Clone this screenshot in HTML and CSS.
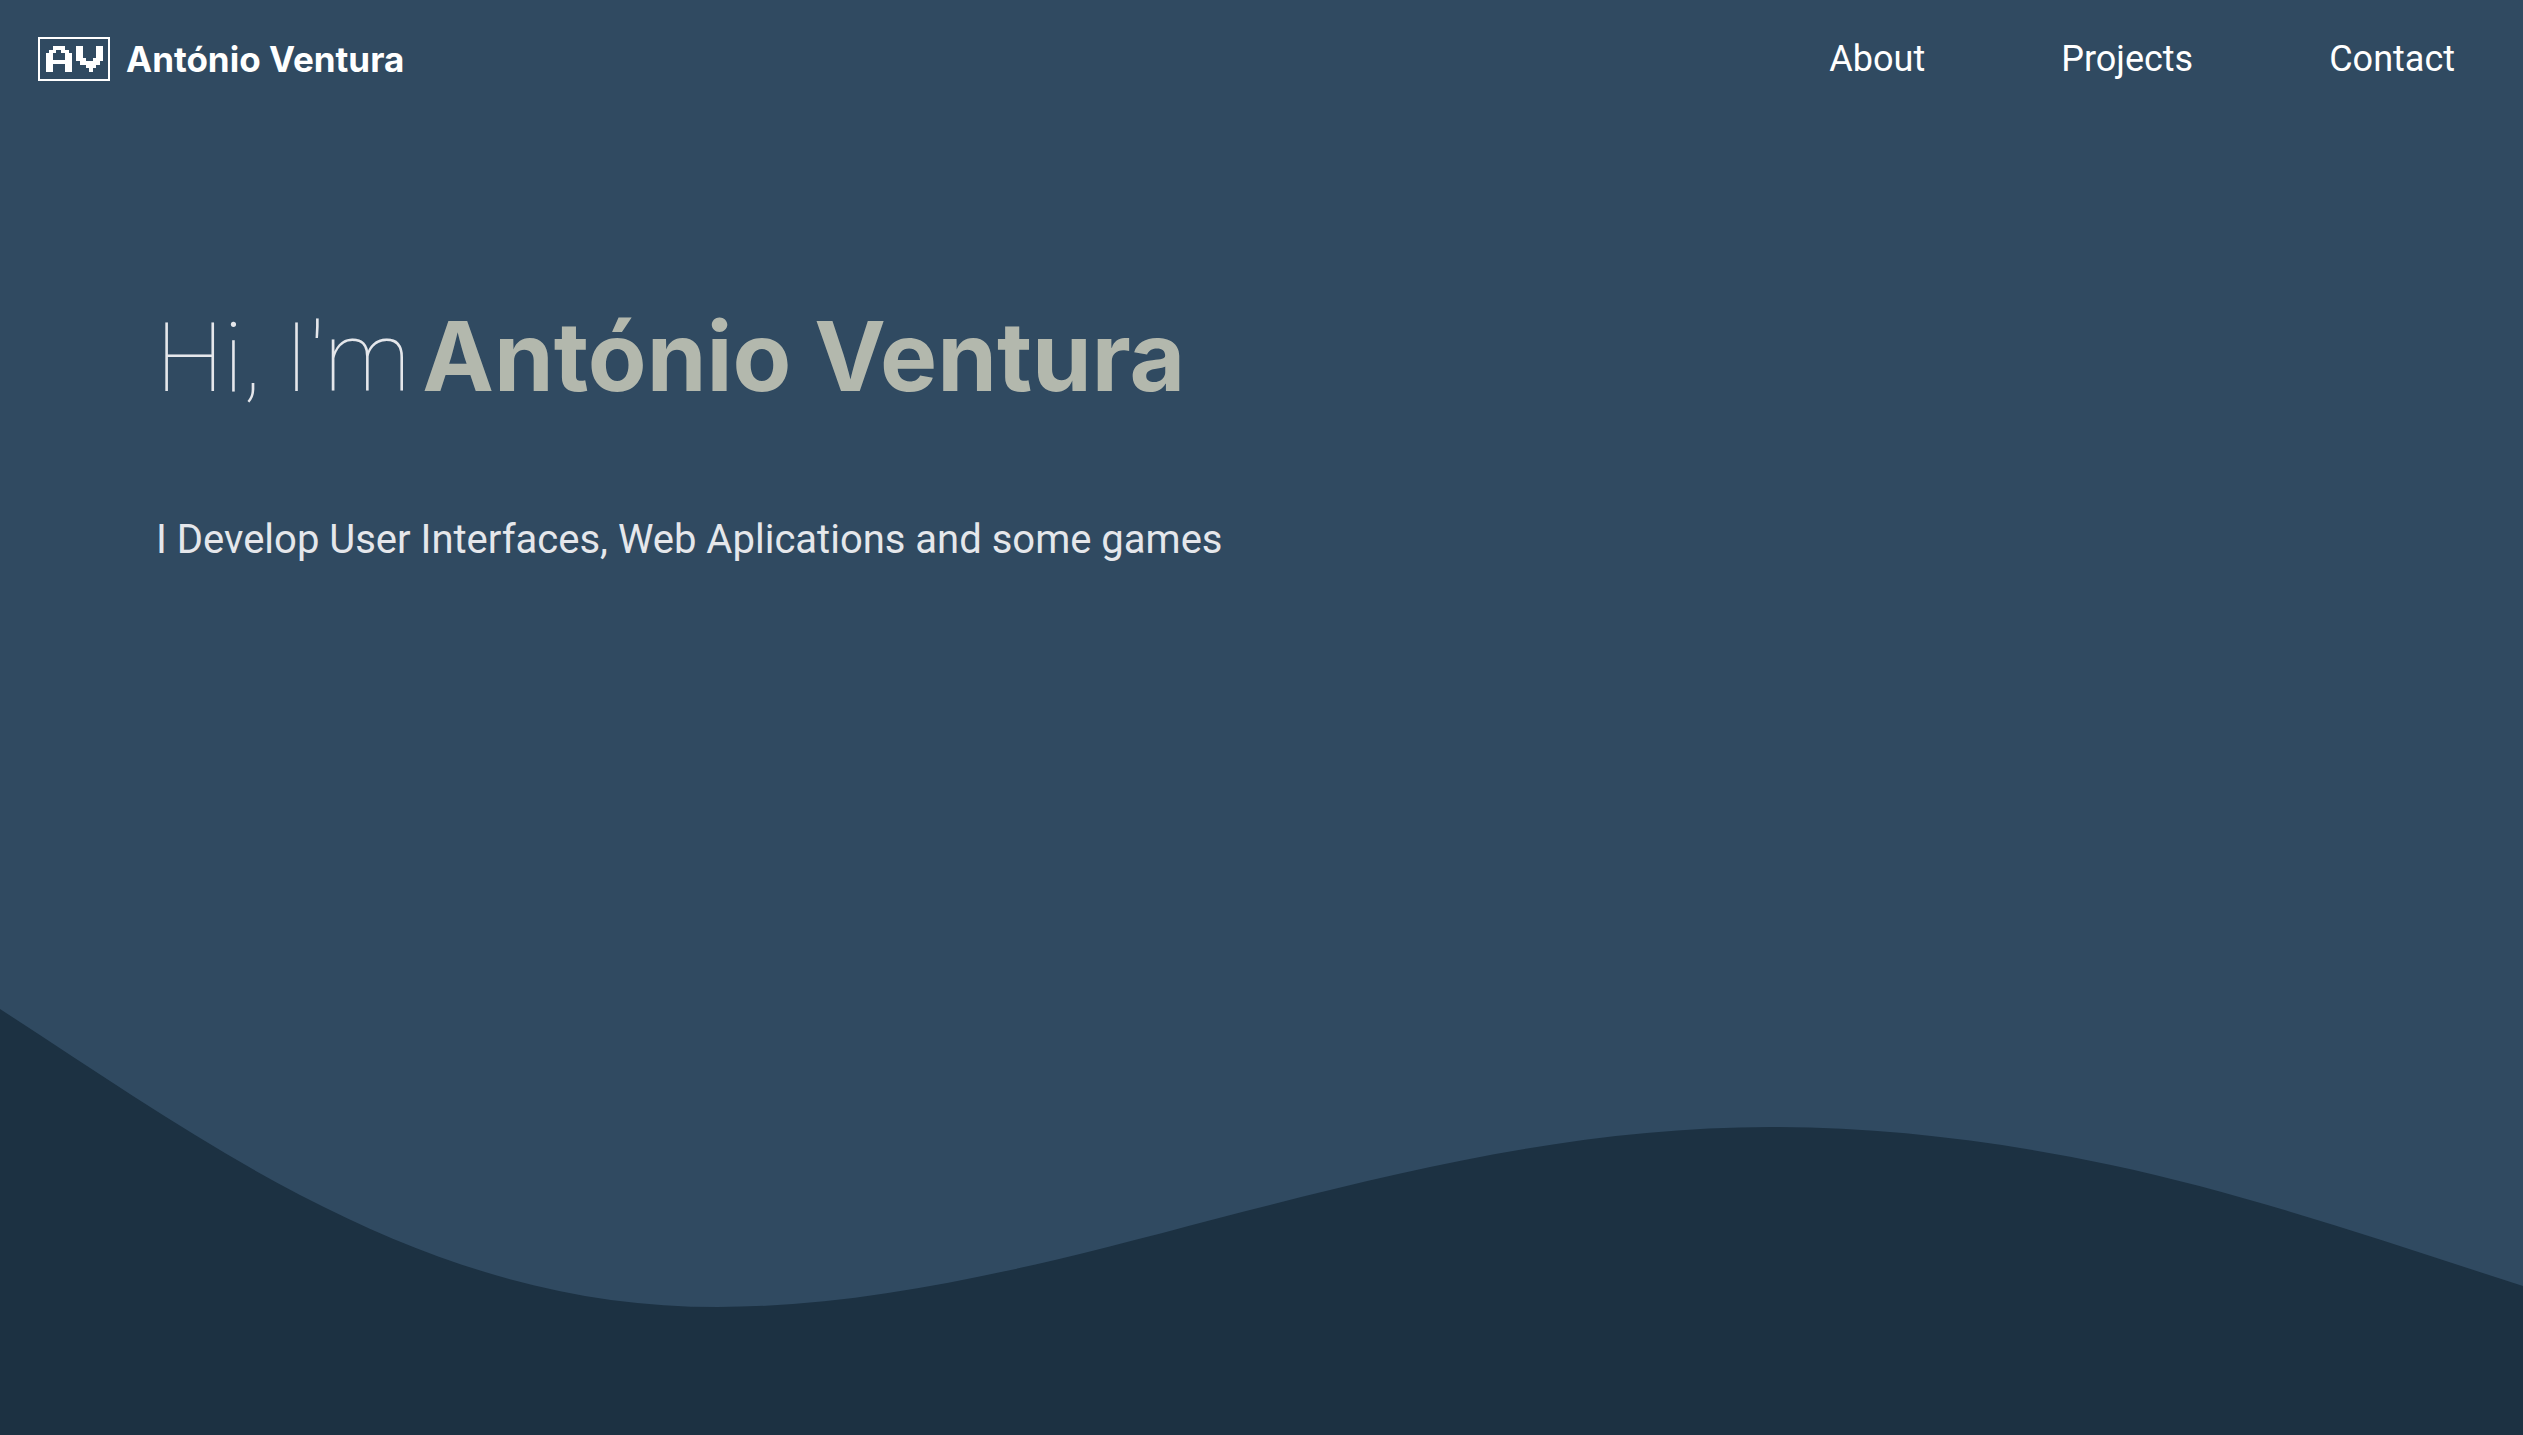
FILE: index.html
```html
<!DOCTYPE html>
<html lang="en">
<head>
<meta charset="utf-8">
<title>António Ventura</title>
<meta name="viewport" content="width=device-width, initial-scale=1">
<link rel="stylesheet" href="styles.css">
</head>
<body>
<header class="header">
  <a class="brand" href="#top">
    <svg class="brand-logo" viewBox="0 0 72 44" aria-hidden="true" shape-rendering="crispEdges">
      <rect x="1" y="1" width="70" height="42" fill="none" stroke="currentColor" stroke-width="2"/>
      <path fill="currentColor" fill-rule="evenodd" d="M15 9h12v4h4v3h3v19h-7v-8H15v8H8V16h3v-3h4zM18 13v3h-3v7h12v-7h-4v-3z"/>
      <path fill="currentColor" d="M38 9h7v12h3v3h7v-3h3V9h7v15h-3v4h-4v3h-3v4h-4v-4h-3v-3h-6v-4h-4z"/>
    </svg>
    <span>António Ventura</span>
  </a>
  <nav class="nav" aria-label="Main">
    <a href="#about">About</a>
    <a href="#projects">Projects</a>
    <a href="#contact">Contact</a>
  </nav>
</header>
<main class="hero" id="top">
  <div class="intro">
    <h1 class="title"><span>Hi, I'm</span> <strong>António Ventura</strong></h1>
    <p class="tagline">I Develop User Interfaces, Web Aplications and some games</p>
  </div>
  <svg class="wave" viewBox="0 0 2523 426" preserveAspectRatio="none" aria-hidden="true">
    <path fill="currentColor" d="M0 0C100 65 200 134 300 186C439 258 570 298 718 298C830 298 943 277 1055 251C1127 234 1198 214 1270 196C1437 153 1600 118 1771 118C1884 118 1998 132 2111 156C2248 185 2386 233 2523 277V426H0Z"/>
  </svg>
</main>
</body>
</html>
```

FILE: styles.css
```css
* {
  box-sizing: border-box;
}

body {
  margin: 0;
  min-height: 100vh;
  display: flex;
  flex-direction: column;
  background: #304a61;
  color: #fff;
  font-family: Roboto, "Liberation Sans", sans-serif;
}

a {
  color: inherit;
  text-decoration: none;
}

.header {
  display: flex;
  align-items: center;
  justify-content: space-between;
  padding: 37px 68px 35px 38px;
  font-size: 36px;
  line-height: 44px;
}

.brand {
  display: flex;
  align-items: center;
  gap: 16px;
  font-family: Inter, "Liberation Sans", sans-serif;
  font-size: 35px;
  font-weight: 700;
}

.brand-logo {
  width: 72px;
  height: 44px;
}

.nav {
  display: flex;
  gap: 136px;
}

.hero {
  flex: 1;
  display: flex;
  flex-direction: column;
  justify-content: space-between;
}

.intro {
  padding: 180px 156px 0;
}

.title {
  display: flex;
  flex-wrap: wrap;
  align-items: baseline;
  column-gap: 12px;
  margin: 0;
  font-size: 96px;
  line-height: 120px;
  font-weight: 100;
  color: #e5e7eb;
}

.title strong {
  font-family: Inter, "Liberation Sans", sans-serif;
  font-weight: 700;
  font-size: 96px;
  color: #b3b8ad;
}

.tagline {
  margin: 96px 0 0;
  font-size: 40px;
  line-height: 52px;
  color: #e5e7eb;
}

.wave {
  display: block;
  width: 100%;
  height: 426px;
  color: #1c3142;
}
```
